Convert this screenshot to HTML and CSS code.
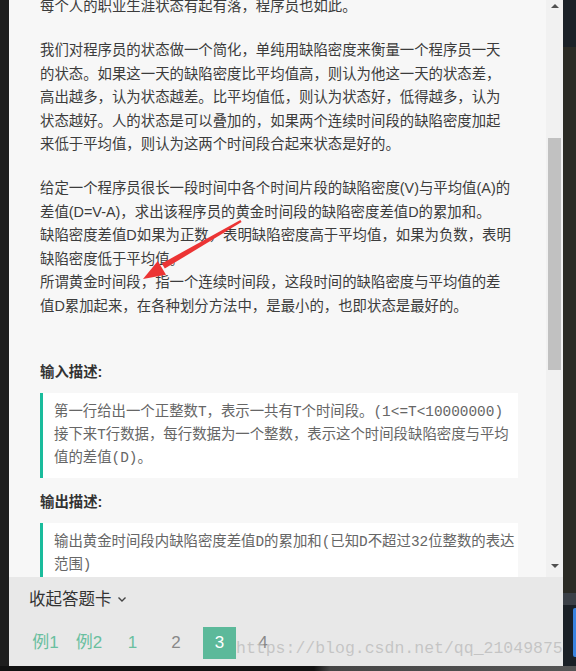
FILE: index.html
```html
<!DOCTYPE html>
<html lang="zh-CN">

<head>
  <meta charset="UTF-8">
  <meta name="viewport" content="width=device-width, initial-scale=1.0">
  <title>黄金时间段</title>
  <link rel="stylesheet" href="styles.css">
</head>

<body>
  <div class="screen">
    <div class="main-row">
      <div class="edge-left"></div>

      <div class="app">
        <!-- Problem text -->
        <div class="problem">
          <div class="content">
            <div class="content-inner">
              <div class="desc">
                <p>每个人的职业生涯状态有起有落，程序员也如此。</p>
                <p>我们对程序员的状态做一个简化，单纯用缺陷密度来衡量一个程序员一天的状态。如果这一天的缺陷密度比平均值高，则认为他这一天的状态差，高出越多，认为状态越差。比平均值低，则认为状态好，低得越多，认为状态越好。人的状态是可以叠加的，如果两个连续时间段的缺陷密度加起来低于平均值，则认为这两个时间段合起来状态是好的。</p>
                <p>给定一个程序员很长一段时间中各个时间片段的缺陷密度(V)与平均值(A)的差值(D=V-A)，求出该程序员的黄金时间段的缺陷密度差值D的累加和。<br>缺陷密度差值D如果为正数，表明缺陷密度高于平均值，如果为负数，表明缺陷密度低于平均值。<br>所谓黄金时间段，指一个连续时间段，这段时间的缺陷密度与平均值的差值D累加起来，在各种划分方法中，是最小的，也即状态是最好的。</p>
              </div>

              <h4 class="section-title">输入描述:</h4>
              <div class="sample">第一行给出一个正整数T，表示一共有T个时间段。(1&lt;=T&lt;10000000)<br>接下来T行数据，每行数据为一个整数，表示这个时间段缺陷密度与平均值的差值(D)。</div>

              <h4 class="section-title out">输出描述:</h4>
              <div class="sample">输出黄金时间段内缺陷密度差值D的累加和(已知D不超过32位整数的表达范围)</div>
            </div>
          </div>

          <!-- Scrollbar -->
          <div class="scrollbar">
            <div class="sb-arrow"><span class="tri-up"></span></div>
            <div class="sb-thumb"></div>
            <div class="sb-arrow down"><span class="tri-down"></span></div>
          </div>
        </div>

        <!-- Answer card -->
        <div class="answer-card">
          <div class="card-toggle">
            收起答题卡
            <svg class="chevron" width="10" height="7" viewBox="0 0 10 7">
              <path d="M1.5 1.5 L5 5 L8.5 1.5" fill="none" stroke="#444" stroke-width="1.4"/>
            </svg>
          </div>
          <div class="card-list">
            <span class="card-item done">例1</span>
            <span class="card-item done">例2</span>
            <span class="card-item done">1</span>
            <span class="card-item">2</span>
            <span class="card-item current">3</span>
            <span class="card-item">4</span>
          </div>
        </div>
      </div>

      <div class="edge-right">
        <div class="seg-top"></div>
        <div class="seg-mid"></div>
        <div class="seg-bar"></div>
        <div class="seg-low"><div class="blue-tab"></div></div>
      </div>
    </div>
    <div class="edge-bottom"></div>

    <!-- Annotation arrow -->
    <svg class="annotation" width="576" height="671" viewBox="0 0 576 671">
      <polygon points="240.4,220.1 241.6,222.1 164.8,268.6 161.8,263.4" fill="#ec3434"/>
      <polygon points="143,279 157.8,260.9 166,274.7" fill="#ec3434"/>
    </svg>

    <div class="watermark">https://blog.csdn.net/qq_21049875</div>
  </div>
</body>

</html>
```

FILE: styles.css
```css
/* General */
body {
  margin: 0;
  background: #151515;
  font-family: "Liberation Sans", "Noto Sans CJK SC", sans-serif;
}

.screen {
  position: relative;
  width: 576px;
  height: 671px;
  overflow: hidden;
  display: flex;
  flex-direction: column;
}

.main-row {
  display: flex;
  height: 666px;
}

.edge-left {
  width: 9px;
  background: #1e1e1e;
}

.app {
  width: 554px;
  display: flex;
  flex-direction: column;
}

/* Problem area */
.problem {
  display: flex;
  height: 577px;
  background: #f7f7f7;
  overflow: hidden;
}

.content {
  flex: 1;
  padding-left: 31px;
  overflow: hidden;
}

.content-inner {
  margin-top: -5px;
  display: flex;
  flex-direction: column;
  align-items: flex-start;
}

.desc {
  width: 473px;
  color: #3c3c3c;
  font-size: 14.4px;
  line-height: 23.5px;
}

.desc p {
  margin: 0 0 20.5px;
}

.section-title {
  margin: 21.5px 0 9px;
  font-size: 14.4px;
  line-height: 24px;
  font-weight: bold;
  color: #333;
}

.section-title.out {
  margin-top: 11.5px;
}

.sample {
  width: 464px;
  padding: 8px 0 8px 11px;
  border-left: 3px solid #1abc9c;
  background: #fff;
  font-family: "Liberation Mono", "Noto Sans CJK SC", monospace;
  font-size: 14.4px;
  line-height: 23px;
  color: #666;
}

/* Scrollbar */
.scrollbar {
  width: 17px;
  background: #f1f1f1;
  display: flex;
  flex-direction: column;
  align-items: center;
}

.sb-arrow {
  height: 12px;
  width: 100%;
  display: flex;
  align-items: center;
  justify-content: center;
}

.sb-arrow.down {
  margin-top: auto;
  margin-bottom: 5px;
}

.tri-up {
  border-left: 4px solid transparent;
  border-right: 4px solid transparent;
  border-bottom: 4px solid #505050;
}

.tri-down {
  border-left: 4px solid transparent;
  border-right: 4px solid transparent;
  border-top: 4px solid #505050;
}

.sb-thumb {
  margin-top: 126px;
  width: 13px;
  height: 232px;
  background: #c1c1c1;
}

/* Answer card */
.answer-card {
  height: 89px;
  box-sizing: border-box;
  padding: 10px 20px 0;
  background: #e8e8e8;
}

.card-toggle {
  display: flex;
  align-items: center;
  gap: 5px;
  font-size: 16.5px;
  line-height: 24px;
  color: #333;
}

.card-list {
  display: flex;
  gap: 10.5px;
  margin-top: 16px;
}

.card-item {
  width: 33px;
  height: 32px;
  line-height: 32px;
  text-align: center;
  font-size: 17px;
  color: #888;
}

.card-item.done {
  color: #6abf9f;
}

.card-item.current {
  background: #5cb99a;
  color: #fff;
}

/* Window edges */
.edge-right {
  width: 13px;
  display: flex;
  flex-direction: column;
}

.seg-top {
  height: 47px;
  background: #1b2127;
}

.seg-mid {
  flex: 1;
  background: #2b2b25;
}

.seg-bar {
  height: 12px;
  background: #3b4047;
}

.seg-low {
  height: 61px;
  background: #1a2026;
  padding-top: 3px;
  box-sizing: border-box;
}

.blue-tab {
  margin-left: 10px;
  width: 3px;
  height: 49px;
  border-radius: 2px 0 0 2px;
  background: #3a84e0;
}

.edge-bottom {
  height: 5px;
  background: linear-gradient(to right, #121212 0, #121212 314px, #454545 330px, #555 576px);
}

/* Overlays */
.annotation {
  position: absolute;
  left: 0;
  top: 0;
  pointer-events: none;
}

.watermark {
  position: absolute;
  left: 236px;
  top: 638px;
  font-family: "Liberation Mono", monospace;
  font-size: 16.5px;
  line-height: 22px;
  color: rgba(185, 185, 185, 0.75);
  white-space: nowrap;
}
```
